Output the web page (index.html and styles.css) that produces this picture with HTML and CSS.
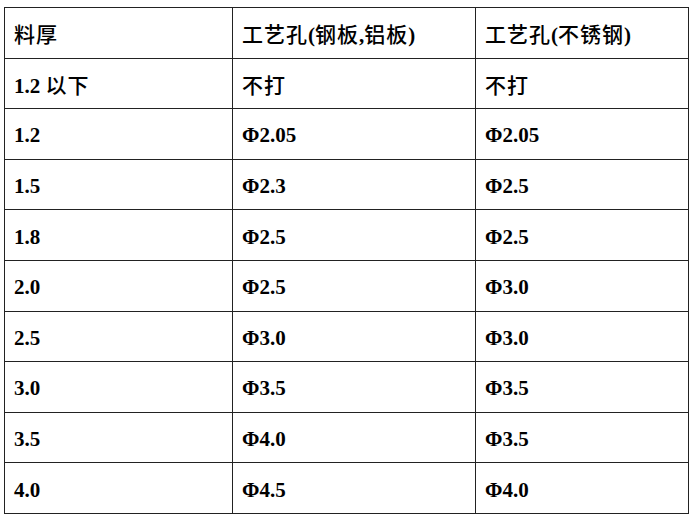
FILE: index.html
```html
<!DOCTYPE html>
<html lang="zh">
<head>
<meta charset="utf-8">
<link rel="stylesheet" href="styles.css">
</head>
<body>
<table class="spec">
  <colgroup>
    <col class="c1"><col class="c2"><col class="c3">
  </colgroup>
  <tr><td><span class="cjk">料厚</span></td><td><span class="cjk">工艺孔</span>(<span class="cjk">钢板</span>,<span class="cjk">铝板</span>)</td><td><span class="cjk">工艺孔</span>(<span class="cjk">不锈钢</span>)</td></tr>
  <tr><td>1.2 <span class="cjk">以下</span></td><td><span class="cjk">不打</span></td><td><span class="cjk">不打</span></td></tr>
  <tr><td>1.2</td><td>Φ2.05</td><td>Φ2.05</td></tr>
  <tr><td>1.5</td><td>Φ2.3</td><td>Φ2.5</td></tr>
  <tr><td>1.8</td><td>Φ2.5</td><td>Φ2.5</td></tr>
  <tr><td>2.0</td><td>Φ2.5</td><td>Φ3.0</td></tr>
  <tr><td>2.5</td><td>Φ3.0</td><td>Φ3.0</td></tr>
  <tr><td>3.0</td><td>Φ3.5</td><td>Φ3.5</td></tr>
  <tr><td>3.5</td><td>Φ4.0</td><td>Φ3.5</td></tr>
  <tr><td>4.0</td><td>Φ4.5</td><td>Φ4.0</td></tr>
</table>
</body>
</html>
```
FILE: styles.css
```css
html, body {
  margin: 0;
  padding: 0;
  background: #fff;
}
body {
  padding: 7px 0 0 4px;
}
.spec {
  border-collapse: collapse;
  table-layout: fixed;
  width: 684px;
  font-family: "Liberation Serif", "Noto Sans CJK SC", serif;
  font-weight: bold;
  font-size: 21px;
  color: #000;
}
.c1 { width: 228px; }
.c2 { width: 243px; }
.c3 { width: 213px; }
.spec tr {
  height: 50.6px;
}
.spec td {
  border: 1px solid #222;
  padding: 4px 8px 0 9px;
  vertical-align: middle;
  white-space: nowrap;
  line-height: 1;
}
.cjk {
  font-family: "Noto Sans CJK SC", sans-serif;
  font-weight: 500;
  font-size: 21px;
  letter-spacing: 1px;
}
```
